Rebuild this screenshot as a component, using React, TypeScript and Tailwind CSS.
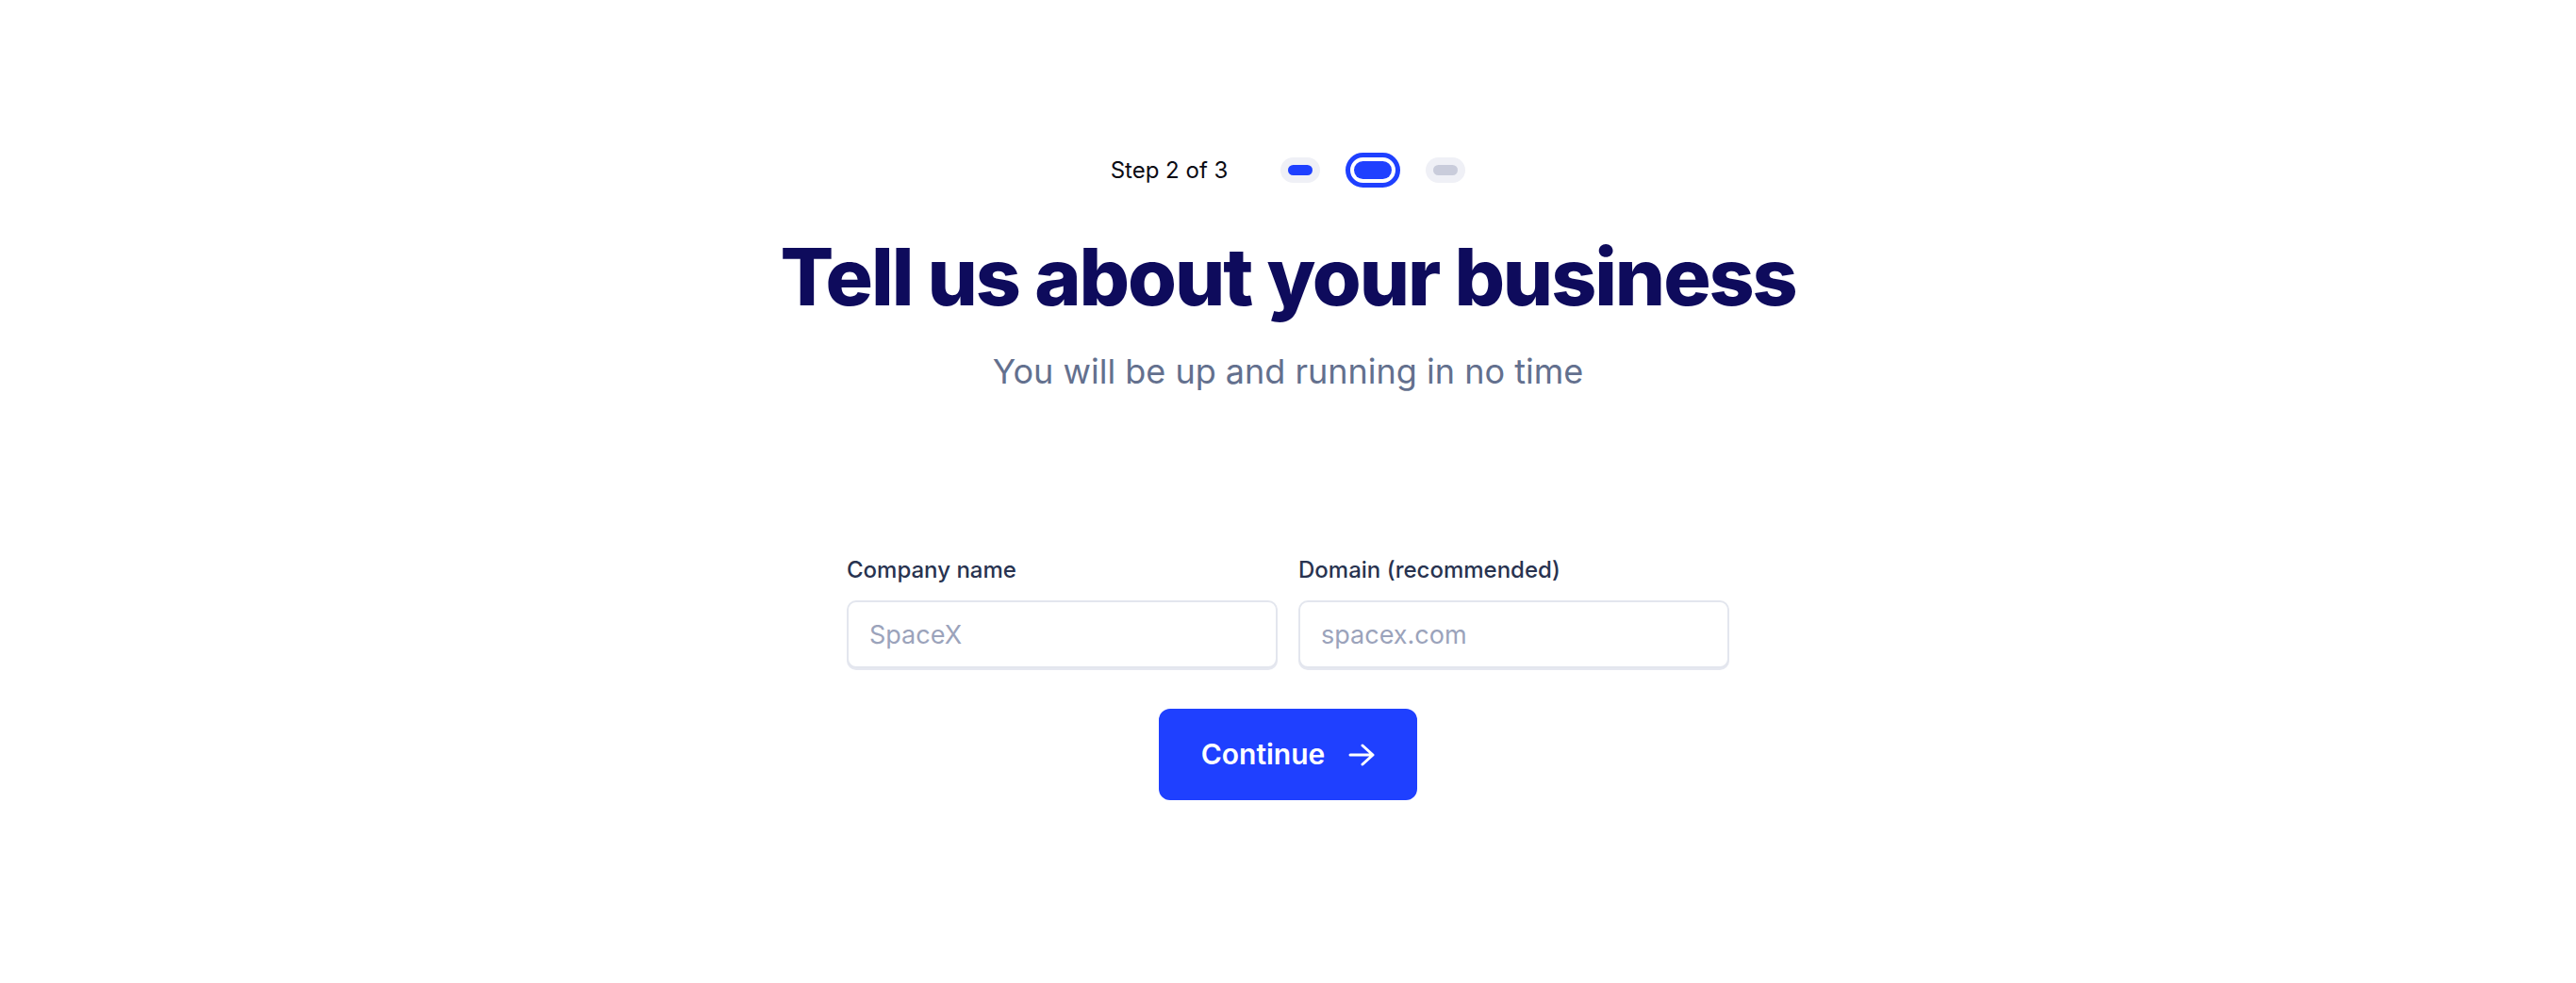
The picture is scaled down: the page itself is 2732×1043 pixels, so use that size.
import React from 'react';

function StepDots() {
  return (
    <div className="flex items-center">
      <div className="w-[42px] h-[27px] rounded-full bg-[#eff0f6] flex items-center justify-center">
        <div className="w-[26px] h-[11px] rounded-full bg-[#1f40ff]" />
      </div>
      <div className="ml-[27px] w-[58px] h-[37px] rounded-full border-[5px] border-[#1f40ff] p-[4px] flex">
        <div className="flex-1 rounded-full bg-[#1f40ff]" />
      </div>
      <div className="ml-[27px] w-[42px] h-[27px] rounded-full bg-[#eff0f6] flex items-center justify-center">
        <div className="w-[26px] h-[11px] rounded-full bg-[#c9ccdb]" />
      </div>
    </div>
  );
}

function Field({ label, placeholder }: { label: string; placeholder: string }) {
  return (
    <div className="flex flex-col w-[457px]">
      <label className="text-[24px] leading-[24px] font-medium text-[#283350]">{label}</label>
      <input
        placeholder={placeholder}
        className="mt-[20px] h-[72px] rounded-[10px] border-2 border-[#e3e6ee] shadow-[0_2px_0_#e6e8f0] px-[22px] text-[27px] text-[#283350] placeholder:text-[#9ba3bb] outline-none bg-white"
      />
    </div>
  );
}

export default function App() {
  return (
    <div className="min-h-screen bg-white flex flex-col items-center pt-[162px] font-['Inter',sans-serif]">
      {/* Progress */}
      <div className="flex items-center h-[37px]">
        <span className="text-[24px] leading-[27px] text-[#0b0b14]">Step 2 of 3</span>
        <div className="ml-[56px]">
          <StepDots />
        </div>
      </div>

      <h1 className="mt-[53px] text-[84px] leading-[84px] font-extrabold tracking-[-0.025em] text-[#0e0b5c]">
        Tell us about your business
      </h1>
      <p className="mt-[40px] text-[36px] leading-[36px] text-[#63708e]">You will be up and running in no time</p>

      {/* Form */}
      <div className="mt-[181px] flex gap-[22px]">
        <Field label="Company name" placeholder="SpaceX" />
        <Field label="Domain (recommended)" placeholder="spacex.com" />
      </div>

      <button className="mt-[43px] h-[97px] w-[274px] rounded-[12px] bg-[#1f40ff] flex items-center justify-center gap-[25px] text-white text-[30px] font-semibold">
        Continue
        <svg width="28" height="24" viewBox="0 0 28 24" fill="none" stroke="currentColor" strokeWidth="3" strokeLinecap="round" strokeLinejoin="round">
          <path d="M2 12H26M15 2L26 12L15 22" />
        </svg>
      </button>
    </div>
  );
}
